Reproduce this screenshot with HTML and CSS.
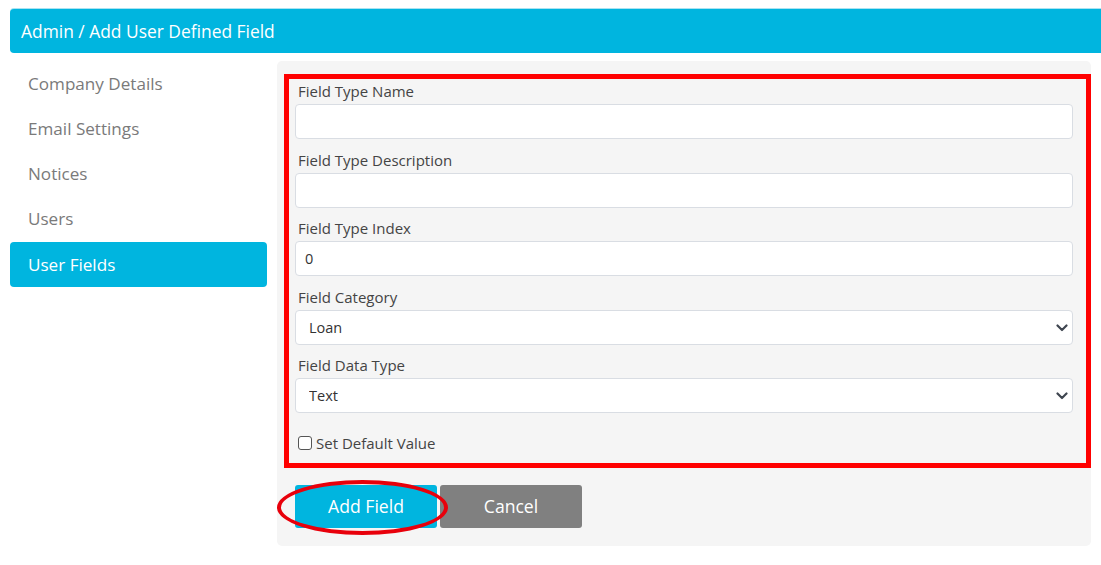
FILE: index.html
```html
<!DOCTYPE html>
<html lang="en">
<head>
<meta charset="utf-8">
<title>Admin / Add User Defined Field</title>
<link rel="stylesheet" href="styles.css">
</head>
<body>
<div class="page">
  <header class="topbar">Admin / Add User Defined Field</header>
  <div class="layout">
    <nav class="sidenav">
      <a class="nav-item">Company Details</a>
      <a class="nav-item">Email Settings</a>
      <a class="nav-item">Notices</a>
      <a class="nav-item">Users</a>
      <a class="nav-item active">User Fields</a>
    </nav>
    <main class="panel">
      <form class="form">
        <div class="field">
          <label class="label">Field Type Name</label>
          <input class="control" type="text" value="">
        </div>
        <div class="field">
          <label class="label">Field Type Description</label>
          <input class="control" type="text" value="">
        </div>
        <div class="field">
          <label class="label">Field Type Index</label>
          <input class="control" type="text" value="0">
        </div>
        <div class="field">
          <label class="label">Field Category</label>
          <div class="select-wrap">
            <select class="control select"><option>Loan</option></select>
            <svg class="chevron" viewBox="0 0 12 8" width="12" height="8"><path d="M1.5 1.5 L6 6 L10.5 1.5" fill="none" stroke="#3f4650" stroke-width="2.2" stroke-linecap="round" stroke-linejoin="round"/></svg>
          </div>
        </div>
        <div class="field">
          <label class="label">Field Data Type</label>
          <div class="select-wrap">
            <select class="control select"><option>Text</option></select>
            <svg class="chevron" viewBox="0 0 12 8" width="12" height="8"><path d="M1.5 1.5 L6 6 L10.5 1.5" fill="none" stroke="#3f4650" stroke-width="2.2" stroke-linecap="round" stroke-linejoin="round"/></svg>
          </div>
        </div>
        <label class="check"><span class="box"></span>Set Default Value</label>
        <div class="actions">
          <button type="button" class="btn btn-primary">Add Field</button>
          <button type="button" class="btn btn-secondary">Cancel</button>
        </div>
      </form>
      <div class="mark-rect"></div>
      <div class="mark-ellipse"></div>
    </main>
  </div>
</div>
</body>
</html>
```
FILE: styles.css
```css
* { box-sizing: border-box; }
html, body { margin: 0; padding: 0; background: #fff; }
body {
  font-family: "Open Sans", "Noto Sans", "Liberation Sans", sans-serif;
  color: #444;
}
.page {
  padding: 9px 0 0 10px;
}
.topbar {
  height: 44px;
  background: #00b5df;
  color: #fff;
  font-size: 17.4px;
  line-height: 44px;
  padding-left: 11px;
  border-radius: 4px 0 0 4px;
  box-shadow: 0 -1px 0 #a9e3f2;
}
.layout {
  display: flex;
  gap: 10px;
  margin-top: 8px;
  padding-right: 10px;
}
.sidenav {
  width: 257px;
  flex: none;
  display: flex;
  flex-direction: column;
}
.nav-item {
  display: block;
  height: 45px;
  line-height: 45px;
  padding-left: 18px;
  font-size: 17.1px;
  color: #7a7a7a;
  border-radius: 4px;
}
.nav-item.active {
  background: #00b5df;
  color: #fff;
  margin-top: 1px;
}
.panel {
  position: relative;
  flex: 1;
  background: #f5f5f5;
  border-radius: 5px;
  padding: 20px 18px 18px 18px;
}
.form { display: flex; flex-direction: column; }
.field { display: flex; flex-direction: column; margin-bottom: 10.5px; }
.label {
  font-size: 15px;
  line-height: 21px;
  color: #444;
  margin-bottom: 2px;
  padding-left: 3px;
}
.control {
  width: 100%;
  height: 35px;
  border: 1px solid #d9dde3;
  border-radius: 4px;
  background: #fff;
  font-family: inherit;
  font-size: 14.5px;
  color: #333;
  padding: 0 9px;
  outline: none;
}
.select-wrap { position: relative; }
.select {
  appearance: none;
  -webkit-appearance: none;
  padding-left: 13px;
}
.chevron {
  position: absolute;
  right: 5px;
  top: 14px;
  pointer-events: none;
}
.check {
  display: flex;
  align-items: center;
  font-size: 15px;
  color: #444;
  margin-top: 8px;
  padding-left: 3px;
  height: 22px;
}
.box {
  width: 14px;
  height: 14px;
  border: 1px solid #555;
  border-radius: 3px;
  background: #fff;
  margin-right: 4px;
}
.actions {
  display: flex;
  gap: 3px;
  margin-top: 31px;
}
.btn {
  width: 142px;
  height: 43px;
  border: none;
  border-radius: 3px;
  font-family: inherit;
  font-size: 17.6px;
  color: #fff;
}
.btn-primary { background: #00b5df; }
.btn-secondary { background: #808080; }
.mark-rect {
  position: absolute;
  left: 7px;
  top: 13px;
  width: 807px;
  height: 394px;
  border: 5px solid #ff0000;
  pointer-events: none;
}
.mark-ellipse {
  position: absolute;
  left: 0;
  top: 419px;
  width: 171px;
  height: 55px;
  border: 4px solid #e8000b;
  border-radius: 50%;
  pointer-events: none;
}
```
